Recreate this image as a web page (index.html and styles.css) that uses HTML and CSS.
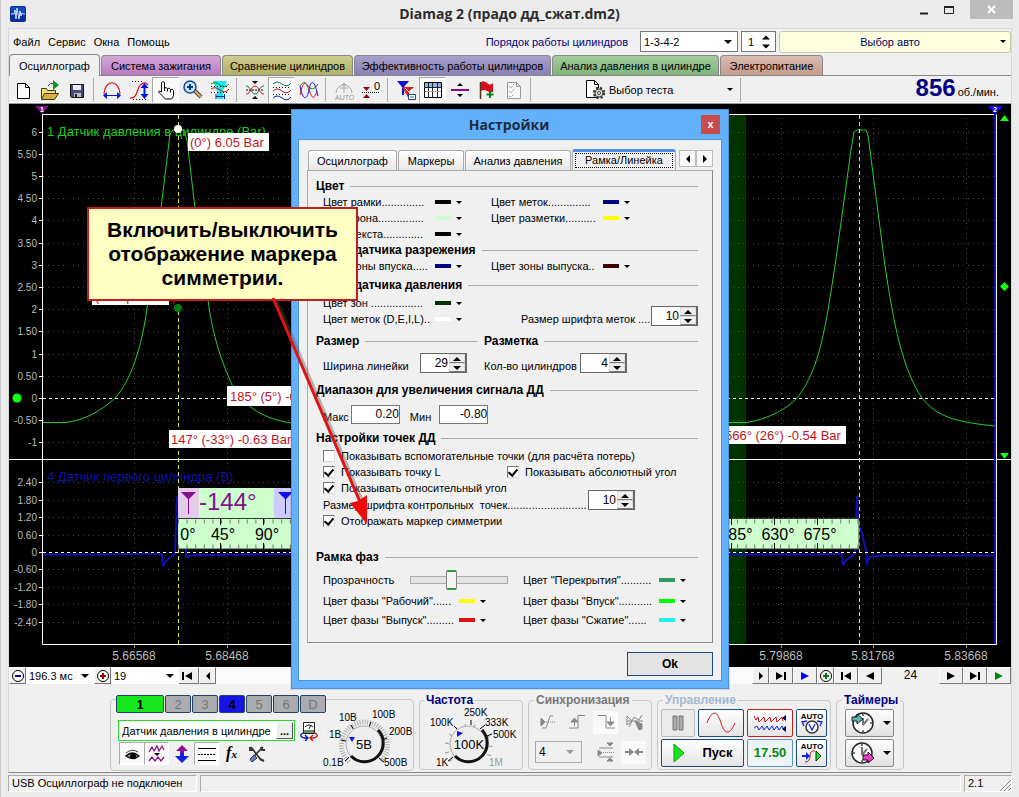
FILE: index.html
```
<!DOCTYPE html>
<html lang="ru">
<head>
<meta charset="utf-8">
<title>Diamag 2 (прадо дд_сжат.dm2)</title>
<link rel="stylesheet" href="styles.css">
</head>
<body>
<div class="app">
  <header class="titlebar">
    <svg class="app-logo" width="16" height="16" viewBox="0 0 16 16"><rect width="16" height="16" rx="2" fill="#0a2f9c"/><rect x="1" y="1" width="14" height="6" rx="1" fill="#1648c0"/><path d="M1 8h3l1-4 1 9 1-11 2 11 1-8 1 5 1-3 1 1h2" fill="none" stroke="#cfe4ff"/></svg>
    <h1 class="app-title">Diamag 2 (прадо дд_сжат.dm2)</h1>
    <div class="win-buttons">
      <button class="win-btn" aria-label="Свернуть"><svg width="10" height="10"><path d="M1 8.500h8" stroke="#222" stroke-width="2"/></svg></button>
      <button class="win-btn" aria-label="Развернуть"><svg width="12" height="10"><path d="M1.500 1.500h9v7h-9z" fill="none" stroke="#222"/><path d="M1 2h10" stroke="#222" stroke-width="2"/></svg></button>
      <button class="win-btn win-close" aria-label="Закрыть"><svg width="10" height="10"><path d="M1 1l7 7M8 1l-7 7" stroke="#fff" stroke-width="2"/></svg></button>
    </div>
  </header>

  <main class="client">
    <div class="menubar">
      <nav class="menu"><button>Файл</button><button>Сервис</button><button>Окна</button><button>Помощь</button></nav>
      <label class="order-label" for="order">Порядок работы цилиндров</label>
      <span class="select order"><select id="order"><option>1-3-4-2</option></select></span>
      <span class="flat-spin"><input value="1" aria-label="Номер цилиндра"><svg width="8" height="14" viewBox="0 0 8 14"><path d="M0 4.500L4 .5l4 4zM0 9.500h8l-4 4z"/></svg></span>
      <button class="car-select"><span>Выбор авто</span><i class="caret"></i></button>
    </div>

    <div class="tabs" role="tablist">
      <button class="tab active" role="tab">Осциллограф</button>
      <button class="tab ignition" role="tab">Система зажигания</button>
      <button class="tab compare" role="tab">Сравнение цилиндров</button>
      <button class="tab efficiency" role="tab">Эффективность работы цилиндров</button>
      <button class="tab pressure" role="tab">Анализ давления в цилиндре</button>
      <button class="tab power" role="tab">Электропитание</button>
    </div>

    <div class="toolbar">
      <button class="tool" aria-label="Новый"><svg width="22" height="22"><path d="M5.500 4.500h8l4 4v11h-12zM13.500 4.500v4h4" fill="#fff" stroke="#000"/></svg></button>
      <button class="tool" aria-label="Открыть"><svg width="22" height="22"><path d="M2.500 20V9.500h5l1 2h8v3" fill="#f0dc6c" stroke="#4a3a00"/><path d="M2.500 20.500l3-6h14l-4 6z" fill="#d8b040" stroke="#4a3a00"/><path d="M9 7q2-4 6-2" fill="none" stroke="#333"/><path d="M14 1l6 5-6 5z" fill="#0a9a2c"/></svg></button>
      <button class="tool" aria-label="Сохранить"><svg width="22" height="22"><path d="M4.500 5.500h13v13h-12l-1-1z" fill="#4a4a7c" stroke="#111"/><path d="M7 6h8v5H7z" fill="#e8ecff"/><path d="M8 14h7v4H8z" fill="#bbb"/><path d="M9 15h2v3H9z" fill="#222"/></svg></button>
      <i class="sep"></i>
      <button class="tool" aria-label="Период"><svg width="22" height="22"><path d="M3 15C4 0 18 0 19 15" fill="none" stroke="#e01010" stroke-width="1.200"/><path d="M2 16.500l4-3.500v3h10v-3l4 3.500-4 3.500v-3H6v3z" fill="#0018e0"/></svg></button>
      <button class="tool" aria-label="Амплитуда"><svg width="22" height="22"><path d="M2 19C12 20 7 3 18 4l2 2" fill="none" stroke="#e01010" stroke-width="1.200"/><path d="M4 2.500h12M5 20.500h14" stroke="#000" stroke-dasharray="1 2"/><path d="M16.500 4l4 5h-3v6h3l-4 5-4-5h3V9h-3z" fill="#0018e0"/></svg></button>
      <button class="tool pressed" aria-label="Рука"><svg width="22" height="22"><path d="M6.500 13V3.500q1.500-2 3 0V9q2-1 3 .5 2-1 3 1 2-1 3 1v5q-1 3-2 3.500h-6L3.500 13q0-2 3 0z" fill="#fff" stroke="#000"/><path d="M9.500 9v3M12.500 9.500v3M15.500 10.500v3" stroke="#000"/></svg></button>
      <button class="tool" aria-label="Лупа"><svg width="22" height="22"><circle cx="8" cy="8" r="6" fill="#cbe6ff" stroke="#124a8c" stroke-width="1.500"/><path d="M5 8h6M8 5v6" stroke="#003c90" stroke-width="2"/><path d="M13 12l6 6" stroke="#5a4a3a" stroke-width="4"/><path d="M13 12l6 6" stroke="#d0a878" stroke-width="2"/></svg></button>
      <button class="tool" aria-label="Область"><svg width="22" height="22"><path d="M4 2h14l-4 10v8H8v-8z" fill="#18e8f0"/><path d="M2 5q5-3 9 1t9-1" fill="none" stroke="#108030"/><path d="M2 7.500h18M2 13.500h18" stroke="#111" stroke-dasharray="1 2"/><path d="M2 10q4-3 9 1t9-1" fill="none" stroke="#d01010"/><path d="M7 17.500h9M7 15v5M15.500 15v5" stroke="#003090"/></svg></button>
      <i class="sep"></i>
      <button class="tool" aria-label="Сжать"><svg width="22" height="22"><path d="M8 2h6l-3 3zM8 20h6l-3-3z"/><path d="M2 11h18" stroke="#000" stroke-dasharray="2 1"/><path d="M2 7c5 0 5 8 9 8s4-8 9-8" fill="none" stroke="#107030"/><path d="M2 15c5 0 5-8 9-8s4 8 9 8" fill="none" stroke="#c01010"/></svg></button>
      <button class="tool pressed" aria-label="Раздельно"><svg width="22" height="22" fill="none"><path d="M2 5q4-4 9 0t9-1" stroke="#108030"/><path d="M2 12q4-4 9 0t9-1" stroke="#d01010"/><path d="M2 19q4-4 9 0t9-1" stroke="#1010c0"/><path d="M2 8.500h18M2 15.500h18" stroke="#111" stroke-dasharray="1 2"/></svg></button>
      <button class="tool" aria-label="Совместно"><svg width="22" height="22" fill="none"><path d="M2 7c4-6 6-3 8 0s6 5 10-2" stroke="#108030"/><path d="M2 16C5 1 8 2 11 11s5 10 8 1" stroke="#e01010"/><path d="M2 7c3 16 7 14 9 4s5-12 9 6" stroke="#1010e0"/></svg></button>
      <i class="sep"></i>
      <button class="tool" aria-label="Авто"><svg width="22" height="22"><path d="M3 14a8 8 0 1116 0M11 4v10M8 7l3-3 3 3M7 9h8" fill="none" stroke="#aaa"/><text class="micro dim" x="2" y="21">AUTO</text></svg></button>
      <button class="tool" aria-label="Ноль"><svg width="22" height="22"><path d="M3 8h7l-3.500 4zM3 19h7l-3.500-4z" fill="#8c0808"/><path d="M2 13.500h18" stroke="#111" stroke-dasharray="1 1"/><text class="tiny" x="14" y="11">0</text></svg></button>
      <i class="sep"></i>
      <button class="tool" aria-label="Маркеры"><svg width="22" height="22"><path d="M2 2h12L9 8v8H7V8z" fill="#1010d8"/><path d="M7 8h12l-5 5v7z" fill="#d82020"/><path d="M10 9l4 4 3-3" fill="none" stroke="#fff"/><path d="M13.500 15.500h7v5h-7z" fill="#fff" stroke="#204080"/><path d="M15 18h4" stroke="#4060a0"/></svg></button>
      <button class="tool pressed" aria-label="Таблица"><svg width="22" height="22"><path d="M2.500 3.500h17v15h-17z" fill="#fff" stroke="#000"/><path d="M3 4h16v4H3z" fill="#8cb4e0"/><path d="M2 8.500h18M6.500 4v15M10.500 4v15M15.500 4v15" stroke="#222"/><path d="M3 12.500h16" stroke="#aaa"/></svg></button>
      <button class="tool" aria-label="Линия"><svg width="22" height="22"><path d="M8 7h6l-3-3zM8 15h6l-3 3z"/><path d="M2 11h18" stroke="#900090" stroke-width="2"/></svg></button>
      <button class="tool" aria-label="Флаг"><svg width="22" height="22"><path d="M4.500 3v17" stroke="#503010" stroke-width="1.500"/><path d="M5 3q3-2 6 1t6 0v9q-3 1-6-1t-6 0z" fill="#d80c18"/><path d="M14 12v7M10.500 15.500h7" stroke="#008020" stroke-width="2"/></svg></button>
      <button class="tool" aria-label="Отчёт"><svg width="22" height="22"><path d="M4.500 3.500h9l4 4v12h-13zM13.500 3.500v4h4" fill="#f8f8f8" stroke="#999"/><path d="M6 7l2 2 3-4M6 12l2 2 3-4M6 17l2 1 3-3" fill="none" stroke="#999" stroke-dasharray="2 1"/></svg></button>
      <i class="sep"></i>
      <button class="test-select">
        <svg width="22" height="22"><path d="M1.500 1.500h8l4 4v13h-12zM9.500 1.500v4h4" fill="#fff" stroke="#000"/><circle cx="14" cy="14" r="5" fill="#c8d0c4" stroke="#333" stroke-width="2.500" stroke-dasharray="2 2"/><circle cx="14" cy="14" r="4" fill="#d4dcd0" stroke="#444"/><circle cx="14" cy="14" r="1.500" fill="#fff" stroke="#444"/></svg>
        <span>Выбор теста</span><i class="caret"></i>
      </button>
      <i class="sep"></i>
      <div class="rpm"><strong>856</strong><span>об./мин.</span></div>
    </div>

    <svg class="scope" viewBox="9 104 1002 563">
      <rect x="9" y="104" width="1002" height="563"/>
      <path class="zone" d="M729 115h17v529h-17z"/>
      <path class="grid" d="M43 132.500h952M43 154.500h952M43 176.500h952M43 198.500h952M43 220.500h952M43 243.500h952M43 265.500h952M43 287.500h952M43 309.500h952M43 331.500h952M43 354.500h952M43 376.500h952M43 420.500h952M43 442.500h952M43 482.500h952M43 500.500h952M43 517.500h952M43 535.500h952M43 569.500h952M43 587.500h952M43 604.500h952M43 622.500h952M134.500 118v526M227.500 118v526M781.500 118v526M873.500 118v526M966.500 118v526"/>
      <path class="axis" d="M42 114.500h954.500V644.500H42.500V114M9 459.500h1002M39 132.500h3M39 154.500h3M39 176.500h3M39 198.500h3M39 220.500h3M39 243.500h3M39 265.500h3M39 287.500h3M39 309.500h3M39 331.500h3M39 354.500h3M39 376.500h3M39 398.500h3M39 420.500h3M39 442.500h3M39 482.500h3M39 500.500h3M39 517.500h3M39 535.500h3M39 552.500h3M39 569.500h3M39 587.500h3M39 604.500h3M39 622.500h3"/>
      <path class="xtick" d="M134.500 645v3M227.500 645v3M781.500 645v3M873.500 645v3M966.500 645v3"/>
      <path class="marker-line" d="M995 110V644"/>
      <g class="ylabels">
        <text x="37" y="136">6</text><text x="37" y="158">5.50</text><text x="37" y="180">5</text><text x="37" y="202">4.50</text><text x="37" y="224">4</text><text x="37" y="247">3.50</text><text x="37" y="269">3</text><text x="37" y="291">2.50</text><text x="37" y="313">2</text><text x="37" y="335">1.50</text><text x="37" y="358">1</text><text x="37" y="380">0.50</text><text x="37" y="402">0</text><text x="37" y="424">-0.50</text><text x="37" y="446">-1</text>
        <text x="37" y="486">2.40</text><text x="37" y="504">1.80</text><text x="37" y="521">1.20</text><text x="37" y="539">0.60</text><text x="37" y="556">0</text><text x="37" y="573">-0.60</text><text x="37" y="591">-1.20</text><text x="37" y="608">-1.80</text><text x="37" y="626">-2.40</text>
      </g>
      <g class="xlabels"><text x="134" y="660">5.66568</text><text x="227" y="660">5.68468</text><text x="781" y="660">5.79868</text><text x="873" y="660">5.81768</text><text x="966" y="660">5.83668</text></g>
      <text class="ch1" x="47" y="136">1 Датчик давления в цилиндре (Bar)</text>
      <text class="ch4" x="47" y="481">4 Датчик первого цилиндра (В)</text>
      <path class="blue" d="M43 554.500h60l50-1 9 1 1 12c2-7 8-9 12-13l1-25 1-32M186 549v8l8-2h16l82-1M729 554.500h90l23-1 1 12c2-7 8-8 12-12l2-58 1 28 3 7 5 20 1 12 3-6 16-1h108"/>
      <path class="green" d="M43 422.500H66C84 420 100 412 115 398C131 381 142 346 147 308L161 208L170 134L173 130H184L187 140L195 208L208 300C213 338 222 362 232 385C245 408 265 419 291 423M729 422.500H747C768 419 787 409 797 398C821 368 826 322 835 266L851 150L854 132L857 130H866L868 135L885 266C894 325 902 368 922 398C937 417 956 422 995 426"/>
      <path class="zero" d="M43 398.500h952M43 552.500h952"/>
      <path class="cursor" d="M178.500 115V644M859.500 115V644"/>
      <circle cx="178" cy="129" r="4" fill="#fff"/><circle cx="178" cy="308" r="4" fill="#087a12"/><circle cx="17" cy="398" r="4.500" fill="#1f1"/>
      <path d="M35 106h14l-7 8z" fill="#80108c"/><path d="M988 106h15l-8 8z" fill="#1010e8"/><text class="flag" x="40" y="112">1</text><text class="flag" x="993" y="112">2</text>
      <path d="M1000 121h9l-4.500-6zM1000 453h9l-4.500 6zM1000 286.500l4.500-4.500 4.500 4.500-4.500 4.500z" fill="#1f1"/>
      <g class="note">
        <path d="M188 133h81v18h-81zM92 287h77v18H92zM227 386h120v20H227zM169 430h123v18H169zM722 426h124v18H722z"/>
        <text x="190" y="147">(0°) 6.05 Bar</text><text x="95" y="301">(потери ВМТ)</text><text x="230" y="401">185° (5°) -0.31 Bar</text><text x="171" y="444">147° (-33°) -0.63 Bar</text><text x="725" y="440">566° (26°) -0.54 Bar</text>
      </g>
      <path d="M178 488h130v31H178zM178 519h681v30H178z" fill="#cfc"/>
      <path d="M178 488h21v30h-21z" fill="#e4cce8"/><path d="M274 488h30v30h-30z" fill="#ccf"/>
      <path d="M181 492h15l-7 7v15h-1v-15z" fill="#80108c"/><path d="M278 492h15l-7 7v15h-1v-15z" fill="#1010e8"/>
      <text class="angle" x="199" y="510">-144°</text>
      <path d="M178 518.500h681v30.500H178" fill="none" stroke="#333"/>
      <path d="M178 521.500h681M178 546.500h681" fill="none" stroke="#777" stroke-width="4" stroke-dasharray="1 7.600"/>
      <path d="M220.500 519v6M263.500 519v6M731.500 519v6M774.500 519v6M817.500 519v6M220.500 543v6M263.500 543v6M731.500 543v6M774.500 543v6M817.500 543v6" stroke="#000"/>
      <g class="degrees"><text x="188" y="540">0°</text><text x="223" y="540">45°</text><text x="267" y="540">90°</text><text x="736" y="540">585°</text><text x="778" y="540">630°</text><text x="820" y="540">675°</text></g>
    </svg>

    <div class="navrow">
      <button class="nav round" aria-label="Уменьшить"><svg width="14" height="14"><circle cx="7" cy="7" r="5.500" fill="#fff" stroke="#000"/><path d="M4 7h6" stroke="#00a" stroke-width="2"/></svg></button>
      <span class="select bare"><select aria-label="Длительность"><option>196.3 мс</option></select></span>
      <button class="nav round" aria-label="Увеличить"><svg width="14" height="14"><circle cx="7" cy="7" r="5.500" fill="#fff" stroke="#000"/><path d="M4 7h6M7 4v6" stroke="#900" stroke-width="2"/></svg></button>
      <span class="select bare frame"><select aria-label="Кадр"><option>19</option></select></span>
      <button class="nav wide" aria-label="В начало"><svg width="12" height="10"><path d="M1 1h2v8H1zM11 1v8L4 5z"/></svg></button>
      <button class="nav" aria-label="Назад"><svg width="8" height="10"><path d="M6 1v8L2 5z"/></svg></button>
      <span class="nav-gap"></span>
      <button class="nav" aria-label="Вперёд"><svg width="8" height="10"><path d="M2 1v8l4-4z"/></svg></button>
      <button class="nav wide" aria-label="В конец"><svg width="12" height="10"><path d="M9 1h2v8H9zM1 1v8l7-4z"/></svg></button>
      <button class="nav wide" aria-label="Пуск просмотра"><svg width="10" height="10"><path d="M1 1v8l8-4z" fill="#00f"/></svg></button>
      <button class="nav round" aria-label="Добавить"><svg width="14" height="14"><circle cx="7" cy="7" r="5.500" fill="#fff" stroke="#000"/><path d="M4 7h6M7 4v6" stroke="#070" stroke-width="2"/></svg></button>
      <button class="nav wide" aria-label="Первый цикл"><svg width="12" height="10"><path d="M1 1h2v8H1zM11 1v8L4 5z"/></svg></button>
      <button class="nav wide" aria-label="Предыдущий цикл"><svg width="10" height="10"><path d="M9 1v8L1 5z"/></svg></button>
      <output class="cycle">24</output>
      <button class="nav wide" aria-label="Следующий цикл"><svg width="10" height="10"><path d="M1 1v8l8-4z"/></svg></button>
      <button class="nav wide" aria-label="Последний цикл"><svg width="12" height="10"><path d="M9 1h2v8H9zM1 1v8l7-4z"/></svg></button>
      <button class="nav wide" aria-label="Воспроизвести"><svg width="10" height="10"><path d="M1 1v8l8-4z" fill="#080"/></svg></button>
    </div>

    <div class="controls">
      <section class="group channels">
        <div class="channel-left">
          <div class="channel-tabs"><button class="ch on">1</button><button class="ch">2</button><button class="ch">3</button><button class="ch sync">4</button><button class="ch">5</button><button class="ch">6</button><button class="ch">D</button></div>
          <div class="sensor-row"><span class="sensor"><input value="Датчик давления в цилиндре" aria-label="Датчик"><button>...</button></span>
            <svg width="20" height="20"><path d="M4.500 1.500h11v11h-11z" fill="#fff" stroke="#222"/><path d="M5 9h10v3H5z" fill="#6a8a6a"/><path d="M6 6q4-4 8 0M10 8l2-4" fill="none" stroke="#222"/><path d="M4 12q-5 3 1 5l3 0M6 14l3 3-3 3" fill="none" stroke="#0010a0" stroke-width="1.300"/><path d="M16 12q5 3-1 5h-3M14 14l-3 3 3 3" fill="none" stroke="#d01010" stroke-width="1.300"/></svg></div>
          <div class="mini-tools">
            <button class="tool pressed" aria-label="Показать"><svg width="20" height="20"><path d="M4 12q6-6 13 0-6 5-13 0z" fill="#999" stroke="#111" stroke-width="1.500"/><circle cx="11" cy="12" r="3"/><path d="M4 9q6-5 12-1" fill="none" stroke="#444"/></svg></button>
            <button class="tool pressed" aria-label="Фильтр"><svg width="20" height="20"><path d="M2 8l3-5 2 4 3-5 2 5 3-5 2 4M2 17l3-4 3 4 3-4 3 4 3-4" fill="none" stroke="#90108c" stroke-width="1.300"/><path d="M7 9h6l-3 3z"/></svg></button>
            <button class="tool" aria-label="Инверсия"><svg width="20" height="20"><path d="M10 1l6 6h-4v4H8V7H4z" fill="#90109a"/><path d="M10 19l7-7h-5V9H8v3H3z" fill="#1020e0"/></svg></button>
            <button class="tool pressed" aria-label="Линии"><svg width="20" height="20"><path d="M1 4.500h18M1 16.500h18" stroke="#000"/><path d="M1 10.500h18" stroke="#000" stroke-dasharray="2 1"/></svg></button>
            <button class="tool fx">f<small>x</small></button>
            <button class="tool" aria-label="Инструменты"><svg width="20" height="20"><path d="M4 3l10 13M16 3L7 12" stroke="#222" stroke-width="1.500"/><path d="M7 11l-4 4 2 3 5-4z" fill="#5c80c0" stroke="#335"/><path d="M14 3l1 3 3 0M3 3v3h3M13 15l4 2" fill="none" stroke="#333" stroke-width="2"/></svg></button>
          </div>
        </div>
        <svg class="knob" width="90" height="64" viewBox="322 706 90 64">
          <path d="M349 762a23 23 0 1131 0" fill="none" stroke="#aaa" stroke-width="5" stroke-dasharray="1 1.500"/>
          <path class="knob-tick" d="M345 761l4-4M341 740l5 1M351 725l3 5M371 722l-2 5M387 738l-5 2M384 762l-5-4"/>
          <circle cx="364" cy="744" r="18" fill="#eee" stroke="#aaa"/><path d="M378 730a18 18 0 01-27 26" fill="none" stroke="#111" stroke-width="3"/>
          <path d="M349 737h6l-3 5z" fill="#11f"/><text class="knob-value" x="364" y="749">5В</text>
          <g class="knob-label"><text x="323" y="766">0.1В</text><text x="329" y="738">1В</text><text x="339" y="721">10В</text><text x="372" y="718">100В</text><text x="389" y="735">200В</text><text x="384" y="766">500В</text></g>
        </svg>
      </section>

      <fieldset class="group freq"><legend>Частота</legend>
        <svg class="knob" width="98" height="63" viewBox="422 707 98 63">
          <path d="M451 761a22 22 0 1135 0" fill="none" stroke="#999" stroke-width="4" stroke-dasharray="1 8"/>
          <path class="knob-tick" d="M448 761l5-4M454 726l4 4M471 720v5M485 725l-5 4M492 734l-5 2"/>
          <circle cx="468" cy="744" r="18" fill="#eee" stroke="#aaa"/><path d="M482 730a18 18 0 01-27 26" fill="none" stroke="#111" stroke-width="3"/>
          <path d="M457 731l6 2-6 4z" fill="#11f"/><text class="knob-value" x="469" y="749">100K</text>
          <g class="knob-label"><text x="436" y="766">1K</text><text x="430" y="726">100K</text><text x="464" y="716">250K</text><text x="485" y="726">333K</text><text x="493" y="738">500K</text><text x="489" y="766" class="dim">1M</text></g>
        </svg>
      </fieldset>

      <fieldset class="group sync-group"><legend>Синхронизация</legend>
        <div class="sync-row">
          <button class="tool" disabled aria-label="По уровню"><svg width="20" height="20" fill="none" stroke="#888"><path d="M4 16h4L12 4h3"/><path d="M2 10h16" stroke-dasharray="1 1"/><path d="M3 6v8l4-4z" fill="#888"/></svg></button>
          <button class="tool" disabled aria-label="По фронту"><svg width="20" height="20" fill="none" stroke="#888"><path d="M2 16h9V3.500h7"/><path d="M7.500 14V7M4 10l3.500-4 3.500 4z" fill="#888"/></svg></button>
          <button class="tool pressed" disabled aria-label="По спаду"><svg width="20" height="20" fill="none" stroke="#888"><path d="M2 3.500h8V16h9"/><path d="M14.500 5v7M11 10l3.500 4 3.500-4z" fill="#888"/></svg></button>
          <button class="tool" disabled aria-label="Вручную"><svg width="20" height="20" fill="none" stroke="#888"><path d="M2 4v9l5-4zM2 9h16M4 15l5-10 5 3 3-5"/><path d="M10 9l7 3v5l-3 1z" fill="#888"/></svg></button>
        </div>
        <div class="sync-row"><span class="select sync-select"><select aria-label="Канал синхронизации"><option>4</option></select></span>
          <button class="tool" disabled aria-label="Порог"><svg width="20" height="20" stroke="#888"><path d="M3 8v6l4-3zM12 1h6l-3 3zM12 19h6l-3-3z" fill="#888"/><path d="M4 6h14M4 15h14"/><path d="M6 10.500h13" stroke-dasharray="1 1"/></svg></button>
          <button class="tool pressed" disabled aria-label="Ширина"><svg width="20" height="20"><path d="M1 9h4V6l5 4-5 4v-3H1zM19 9h-4V6l-5 4 5 4v-3h4z" fill="#888"/></svg></button></div>
      </fieldset>

      <fieldset class="group run-group"><legend>Управление</legend>
        <div class="run-grid">
          <button class="cmd" disabled aria-label="Пауза"><svg width="14" height="16"><path d="M2 1h4v14H2zM8 1h4v14H8z" fill="#aaa" stroke="#777"/></svg></button>
          <button class="cmd" aria-label="Синусоида"><svg width="32" height="22"><path d="M2 11C8-5 13 1 16 11s8 14 14 0" fill="none" stroke="#e01010"/></svg></button>
          <button class="cmd live" aria-label="Самописец"><svg width="34" height="22" fill="none"><path d="M1 4l2 4 2-3 1 5 3-3 2-2 1 5 3-3 2-2 1 5 3-3 2-2 1 5 3-3 2-2 1 4" stroke="#d01010"/><path d="M1 16l3-2 2 4 3-4 2 4 3-4 2 4 3-4 2 4 3-4 2 4 3-4 2 4" stroke="#1020e0"/><path d="M33 3v6l-4-3zM33 14v6l-4-3z" fill="#006"/></svg></button>
          <button class="cmd" aria-label="Автонастройка"><svg width="26" height="24"><text class="auto" x="13" y="8">AUTO</text><circle cx="13" cy="16" r="6" fill="#fff" stroke="#333" stroke-width="1.500"/><path d="M10 13l3 6 3-6M5 15l-2-4 5-1M21 15l2-4-5-1" fill="none" stroke="#12d" stroke-width="1.300"/></svg></button>
          <button class="cmd start"><svg width="12" height="20"><path d="M1 1l10 9L1 19z" fill="#19e51c" stroke="#0a9a10"/></svg><span>Пуск</span></button>
          <button class="cmd rate">17.50</button>
          <button class="cmd" aria-label="Автопуск"><svg width="26" height="24"><text class="auto" x="13" y="8">AUTO</text><path d="M6 21q5 0 5-6t5-5" fill="none" stroke="#c01010"/><path d="M3 14h4v-3l4 4-4 4v-3H3z" fill="#12e"/><path d="M17 10v10l5-5z" fill="#1e2" stroke="#030"/></svg></button>
        </div>
      </fieldset>

      <fieldset class="group timers"><legend>Таймеры</legend>
        <button class="timer" aria-label="Таймер начала"><svg width="28" height="24"><circle cx="14" cy="12" r="10" fill="#fff" stroke="#222" stroke-width="1.500"/><path d="M14 14V7M14 14l5-6M14 3v2M23 12h-2M14 21v-2" stroke="#777" stroke-width="2"/><path d="M3 6h5V3l6 5-6 5v-3H3z" fill="#5cb8b0" stroke="#123"/></svg><i class="caret"></i></button>
        <button class="timer" aria-label="Таймер конца"><svg width="28" height="24"><circle cx="13" cy="12" r="10" fill="#fff" stroke="#222" stroke-width="1.500"/><path d="M13 14V6M13 14l5-6M13 3v2M4 12h2M13 21v-2" stroke="#777" stroke-width="2"/><path d="M14 14h5v-3l6 6-6 5v-3h-5z" fill="#e63fc0" stroke="#303"/></svg><i class="caret"></i></button>
      </fieldset>
    </div>
  </main>

  <footer class="status"><div class="status-main">USB Осциллограф не подключен</div><div class="status-mid"></div><div class="status-ver">2.1<svg width="12" height="12"><path d="M1 12L12 1M5 12l7-7M9 12l3-3" stroke="#888"/></svg></div></footer>

  <div class="dialog" role="dialog" aria-labelledby="dlg-title">
    <div class="dialog-title"><h2 id="dlg-title">Настройки</h2><button class="dialog-close" aria-label="Закрыть">x</button></div>
    <div class="dialog-body">
      <div class="dialog-tabs" role="tablist">
        <button class="dtab t1" role="tab">Осциллограф</button><button class="dtab t2" role="tab">Маркеры</button><button class="dtab t3" role="tab">Анализ давления</button><button class="dtab t4 current" role="tab"><span>Рамка/Линейка</span></button>
        <div class="tab-scroll"><button aria-label="Влево"><svg width="6" height="8"><path d="M5 0v8L1 4z"/></svg></button><button aria-label="Вправо"><svg width="6" height="8"><path d="M1 0v8l4-4z"/></svg></button></div>
      </div>
      <div class="page">
        <h3>Цвет</h3>
        <div class="row"><button class="color"><span>Цвет рамки..............</span><i class="sw black"></i><i class="caret"></i></button><button class="color"><span>Цвет меток..............</span><i class="sw navy"></i><i class="caret"></i></button></div>
        <div class="row"><button class="color"><span>Цвет фона...............</span><i class="sw mint"></i><i class="caret"></i></button><button class="color"><span>Цвет разметки..........</span><i class="sw yellow"></i><i class="caret"></i></button></div>
        <div class="row"><button class="color"><span>Цвет текста.............</span><i class="sw black"></i><i class="caret"></i></button></div>
        <h3>Цвета датчика разрежения</h3>
        <div class="row"><button class="color"><span>Цвет зоны впуска.....</span><i class="sw navy"></i><i class="caret"></i></button><button class="color"><span>Цвет зоны выпуска..</span><i class="sw maroon"></i><i class="caret"></i></button></div>
        <h3 class="pressure-head">Цвета датчика давления</h3>
        <div class="row"><button class="color"><span>Цвет зон .................</span><i class="sw forest"></i><i class="caret"></i></button></div>
        <div class="row"><button class="color"><span>Цвет меток (D,E,I,L)..</span><i class="sw white"></i><i class="caret"></i></button><div class="mark-size"><label for="marksize">Размер шрифта меток ....</label><span class="spin"><input id="marksize" value="10"><button aria-label="Больше"></button><button aria-label="Меньше"></button></span></div></div>
        <div class="sizes">
          <section><h3>Размер</h3><div class="row tall"><label for="rwidth">Ширина линейки</label><span class="spin"><input id="rwidth" value="29"><button aria-label="Больше"></button><button aria-label="Меньше"></button></span></div></section>
          <section><h3>Разметка</h3><div class="row tall"><label for="cyls">Кол-во цилиндров</label><span class="spin"><input id="cyls" value="4"><button aria-label="Больше"></button><button aria-label="Меньше"></button></span></div></section>
        </div>
        <h3 class="range-head">Диапазон для увеличения сигнала ДД</h3>
        <div class="row tall range"><label for="max">Макс</label><input class="num" id="max" value="0.20"><label for="min">Мин</label><input class="num" id="min" value="-0.80"></div>
        <h3 class="points-head">Настройки точек ДД</h3>
        <div class="row checks"><label><input type="checkbox">Показывать вспомогательные точки (для расчёта потерь)</label></div>
        <div class="row checks"><label class="half"><input type="checkbox" checked>Показывать точку L</label><label><input type="checkbox" checked>Показывать абсолютный угол</label></div>
        <div class="row checks"><label><input type="checkbox" checked>Показывать относительный угол</label></div>
        <div class="row point-size"><label for="psize">Размер шрифта контрольных&nbsp; точек..........................</label><span class="spin"><input id="psize" value="10"><button aria-label="Больше"></button><button aria-label="Меньше"></button></span></div>
        <div class="row checks"><label><input type="checkbox" checked>Отображать маркер симметрии</label></div>
        <h3 class="phase-head">Рамка фаз</h3>
        <div class="phases">
          <div class="opacity"><label for="op">Прозрачность</label><input type="range" id="op" value="41"></div>
          <button class="color"><span>Цвет "Перекрытия"..........</span><i class="sw sea"></i><i class="caret"></i></button>
          <button class="color"><span>Цвет фазы "Рабочий"......</span><i class="sw yellow"></i><i class="caret"></i></button>
          <button class="color"><span>Цвет фазы "Впуск"...........</span><i class="sw lime"></i><i class="caret"></i></button>
          <button class="color"><span>Цвет фазы "Выпуск".........</span><i class="sw red"></i><i class="caret"></i></button>
          <button class="color"><span>Цвет фазы "Сжатие"......</span><i class="sw cyan"></i><i class="caret"></i></button>
        </div>
      </div>
      <button class="ok">Ok</button>
    </div>
  </div>

  <p class="callout">Включить/выключить отображение маркера симметрии.</p>
  <svg class="pointer" width="100" height="230" viewBox="268 297 100 230"><path d="M276 300l88 206" stroke="#555" stroke-opacity=".4" stroke-width="4"/><path d="M273 298l87 204" stroke="#e01414" stroke-width="3"/><path d="M367 524l-17-21 8-2 9-6z" fill="#f00a0a"/></svg>
</div>
</body>
</html>
```
FILE: styles.css
```
* { box-sizing: border-box; }
body { margin: 0; background: #ebebeb; color: #000; font: 11px/16px "Liberation Sans", Arial, sans-serif; }
button, input, select { font: inherit; color: inherit; margin: 0; padding: 0; border: 0; background: none; border-radius: 0; }
h1, h2, h3, p { margin: 0; }
svg { display: block; flex: none; }
.app { position: relative; min-height: 100vh; border-left: 1px solid #ccc; display: flex; flex-direction: column; overflow: hidden; }

.titlebar { display: flex; align-items: center; height: 28px; padding-left: 9px; }
.app-title { flex: 1; text-align: center; font: bold 14px/20px "Open Sans", "Noto Sans", sans-serif; color: #2c2c2c; padding-left: 82px; }
.win-buttons { display: flex; align-self: flex-start; align-items: center; margin-right: 6px; }
.win-btn { width: 25px; height: 19px; display: grid; place-items: center; }
.win-close { width: 43px; background: #bcbcbc; margin-left: 9px; }

.client { margin: 0 7px; background: #f0f0f0; border: 1px solid #d8d8d8; border-bottom: 1px solid #888; }
.menubar { display: flex; align-items: center; height: 25px; }
.menu { display: flex; gap: 8px; padding-left: 4px; flex: 1; }
.order-label { color: #000080; margin-right: 12px; }
.select { position: relative; display: flex; background: #fff; }
.select select { appearance: none; width: 100%; padding-left: 3px; outline: 0; }
.select::after { content: ""; position: absolute; right: 5px; top: calc(50% - 2px); border: 4px solid transparent; border-top-color: #000; border-bottom: 0; pointer-events: none; }
.order { width: 98px; height: 21px; border: 1px solid #777; margin-right: 3px; }
.flat-spin { display: flex; align-items: center; width: 35px; height: 21px; border: 1px solid #777; background: #fff; margin-right: 3px; }
.flat-spin input { width: 20px; padding-left: 6px; }
.car-select { display: flex; align-items: center; width: 232px; height: 22px; background: #ffffe0; border: 1px solid #c4c8b0; border-radius: 3px; color: #000060; padding-right: 4px; }
.car-select span { flex: 1; }
.caret { border: 3px solid transparent; border-top-color: #000; border-bottom: 0; }

.tabs { display: flex; align-items: flex-end; gap: 1px; height: 22px; border-bottom: 1px solid #888; }
.tab { height: 20px; border: 1px solid #888; border-bottom: 0; border-radius: 4px 4px 0 0; white-space: nowrap; }
.tab.active { width: 91px; height: 22px; background: #f0f0f0; margin-bottom: -1px; }
.ignition { width: 120px; background: linear-gradient(#d4a8d8, #b87cc0); }
.compare { width: 131px; background: linear-gradient(#cccc90, #b0b068); }
.efficiency { width: 197px; background: linear-gradient(#a8a0cc, #8880b4); }
.pressure { width: 167px; background: linear-gradient(#a4cc9c, #80b47c); }
.power { width: 103px; background: linear-gradient(#d8bcb0, #c49c8c); }

.toolbar { display: flex; align-items: center; height: 28px; border-bottom: 1px solid #999; box-shadow: inset 0 -1px #fff; }
.tool { width: 27px; height: 26px; display: grid; place-items: center; flex: none; }
.tool.pressed { background: #fafafa; border: 1px solid #aaa; border-right-color: #fff; border-bottom-color: #fff; }
.sep { width: 1px; height: 24px; margin: 0 4px 0 3px; background: #aaa; flex: none; }
.micro { font-size: 7px; }
.tiny { font-size: 11px; }
.dim { fill: #999; }
.test-select { display: flex; align-items: center; gap: 2px; width: 202px; padding: 0 4px 0 50px; }
.test-select .caret { margin-left: auto; }
.rpm { display: flex; align-items: baseline; gap: 2px; margin-left: auto; padding-right: 12px; }
.rpm strong { font-size: 24px; color: #000080; }

.scope { width: 100%; height: auto; font-size: 11px; }
.zone { fill: #003300; }
.grid { stroke: #4a4a3c; stroke-dasharray: 1 4; fill: none; }
.axis { stroke: #fff; fill: none; }
.xtick { stroke: #999; }
.marker-line { stroke: #1010b0; stroke-width: 2; }
.ylabels { fill: #bbb; text-anchor: end; font-size: 10px; }
.xlabels { fill: #bbb; text-anchor: middle; font-size: 12px; }
.ch1 { fill: #2c2; font-size: 13px; }
.ch4 { fill: #1212a8; font-size: 13px; }
.blue { fill: none; stroke: #1010b4; stroke-width: 2; }
.green { fill: none; stroke: #28cc30; stroke-width: 1; }
.zero { fill: none; stroke: #fff; stroke-dasharray: 3 3; }
.cursor { fill: none; stroke: #e4e440; stroke-dasharray: 4 3; }
.flag { fill: #fff; font-size: 7px; font-weight: bold; }
.note path { fill: #fff; }
.note text { fill: #c41420; font-size: 13px; }
.angle { fill: #80108c; font-size: 24px; }
.degrees { text-anchor: middle; font-size: 16px; }

.navrow { display: flex; height: 17px; background: #fafafa; }
.nav { width: 17px; height: 17px; display: grid; place-items: center; background: #f0f0f0; border: 1px solid #fff; border-right-color: #777; border-bottom-color: #777; flex: none; }
.nav.wide { width: 24px; }
.bare { width: 68px; }
.bare.frame { margin-right: -4px; }
.nav-gap { flex: 1; }
.cycle { width: 57px; text-align: center; background: #f0f0f0; font-size: 12px; }

.controls { display: flex; align-items: flex-start; gap: 5px; height: 88px; padding: 9px 0 0 101px; }
.group { margin: 0; padding: 0 3px; min-width: 0; border: 1px solid #c8c8c8; border-radius: 4px; height: 77px; }
legend { font-weight: bold; font-size: 12px; line-height: 14px; color: #000080; padding: 0 2px; margin-left: 2px; }
.channels { display: flex; width: 304px; height: 72px; margin-top: 6px; padding: 0 0 0 5px; }
.channel-left { margin-top: -5px; width: 206px; }
.channels .knob { margin-top: 6px; }
.channel-tabs { display: flex; gap: 1px; width: 211px; }
.ch { flex: none; width: 26px; height: 18px; background: #a9adb2; color: #777; border: 1px solid #224060; border-radius: 2px; font-size: 13px; line-height: 15px; }
.ch.on { width: 48px; background: #14e81c; color: #000; font-weight: bold; }
.ch.sync { background: #1414e4; color: #000; font-weight: bold; }
.sensor-row { display: flex; align-items: center; gap: 4px; margin: 7px 0 1px 2px; }
.sensor { display: flex; width: 177px; height: 21px; background: #fff; border: 1px solid #2bd62f; padding: 1px; }
.sensor input { width: 157px; padding-left: 2px; }
.sensor button { width: 17px; line-height: 8px; background: #eee; border: 1px solid #fff; border-right-color: #555; border-bottom-color: #555; font-weight: bold; }
.mini-tools { display: flex; margin-left: 3px; }
.mini-tools .tool { width: 25px; height: 23px; }
.fx { font: italic bold 16px/16px "Liberation Serif", serif; display: block; }
.fx small { font-size: 11px; }
.knob-tick { stroke: #000; }
.knob-value { text-anchor: middle; font-size: 13px; }
.knob-label { font-size: 10px; }
.freq { width: 104px; padding-left: 2px; }
.sync-group { width: 124px; padding-left: 6px; }
.sync-group legend { color: #777; margin-left: -1px; }
.sync-row { display: flex; gap: 4px; height: 30px; align-items: center; }
.sync-row .tool { width: 25px; height: 23px; }
.sync-row .tool.pressed { border: 0; }
.sync-select { width: 47px; height: 22px; border: 1px solid #aaa; background: #f0f0f0; margin-right: 6px; font-size: 12px; }
.sync-select::after { border-top-color: #999; right: 7px; }
.run-group { width: 174px; }
.run-group legend { color: #a4b8d0; }
.run-grid { display: grid; grid-template-columns: 34px 46px 46px 31px; gap: 2px 3px; margin-top: 2px; }
.cmd { height: 28px; display: flex; align-items: center; justify-content: center; background: linear-gradient(#fff, #e4e4e4); border: 1px solid #1c4a7c; border-radius: 2px; font-weight: bold; }
.cmd:disabled { background: #eaeaea; border-color: #bbb; }
.cmd.live { border-color: #d41818; }
.start { grid-column: span 2; font-size: 13px; gap: 18px; }
.rate { color: #0a8414; background: #ecf4f8; border-color: #5c94bc; font-size: 13px; }
.auto { text-anchor: middle; font-size: 8px; font-weight: bold; }
.timers { width: 68px; padding: 0 8px; }
.timers legend { margin-left: -3px; }
.timer { width: 49px; height: 28px; margin: 2px 0 0; display: flex; align-items: center; gap: 6px; padding-left: 3px; background: linear-gradient(#fdfdfd, #e0e0e0); border: 1px solid #888; border-radius: 2px; }
.timer .caret { border-width: 4px 4px 0; }

.status { display: flex; gap: 3px; height: 17px; margin: 2px 7px 0; }
.status > div { border: 1px solid #aaa; border-right-color: #fff; border-bottom-color: #fff; background: #f0f0f0; padding-left: 3px; line-height: 15px; }
.status-main { width: 189px; white-space: nowrap; }
.status-mid { flex: 1; }
.status-ver { width: 48px; display: flex; justify-content: space-between; align-items: flex-end; }

.dialog { position: absolute; left: 290px; top: 109px; width: 438px; background: #64b1fb; border: 1px solid #4c94dc; padding: 0 6px 7px; box-shadow: 0 0 0 1px rgba(0, 0, 0, .1); }
.dialog-title { display: flex; height: 29px; align-items: center; }
.dialog-title h2 { flex: 1; padding-left: 19px; text-align: center; font: bold 14px/20px "Open Sans", "Noto Sans", sans-serif; color: #1c2c3c; }
.dialog-close { width: 19px; height: 19px; background: #c84c4c; color: #fff; font-weight: bold; line-height: 17px; margin-right: 2px; }
.dialog-body { background: #f0f0f0; border: 1px solid #4c94dc; padding: 8px 8px 4px; display: flex; flex-direction: column; }
.dialog-tabs { display: flex; align-items: flex-end; gap: 1px; height: 22px; padding-left: 1px; }
.dtab { height: 20px; background: linear-gradient(#fff, #e8e8e8); border: 1px solid #aaa; border-bottom: 0; border-radius: 3px 3px 0 0; white-space: nowrap; }
.t1 { width: 89px; }
.t2 { width: 66px; }
.t3 { width: 106px; }
.t4 { width: 104px; }
.dtab.current { height: 22px; background: #f0f0f0; border-top: 3px solid #4c90e0; padding: 0 2px 3px; margin-bottom: -1px; }
.current span { display: block; border: 1px dotted #000; line-height: 13px; }
.tab-scroll { display: flex; margin: 0 0 3px 2px; }
.tab-scroll button { width: 17px; height: 17px; display: grid; place-items: center; border: 1px solid #bbb; background: #f8f8f8; }
.page { border: 1px solid #aaa; border-right-color: #888; border-bottom-color: #888; padding: 7px 14px 14px 8px; }
.page h3 { display: flex; align-items: center; gap: 6px; height: 16px; font-size: 12px; white-space: nowrap; }
.page h3::after { content: ""; flex: 1; height: 1px; background: #aaa; }
.page .pressure-head { margin-top: 3px; }
.pressure-head + .row { margin-top: 2px; }
.row { display: flex; align-items: center; height: 16px; padding-left: 7px; white-space: nowrap; }
.row > .color:first-child { margin-right: 26px; }
.color { display: flex; align-items: center; width: 142px; text-align: left; }
.color span { width: 112px; height: 16px; white-space: nowrap; }
.color .caret { margin-left: 5px; }
.sw { width: 16px; height: 4px; flex: none; }
.black { background: #000; }
.navy { background: #000080; }
.mint { background: #ccffcc; }
.yellow { background: #ff0; }
.maroon { background: #400000; }
.forest { background: #003300; }
.white { background: #fff; }
.sea { background: #339966; }
.lime { background: #0f0; }
.red { background: #e01010; }
.cyan { background: #20f0f0; }
.spin { display: grid; grid-template: 9px 9px / 28px 16px; width: 47px; height: 20px; border: 1px solid #666; border-right-width: 2px; background: #fff; flex: none; }
.spin input { grid-row: span 2; width: 28px; text-align: right; font-size: 12px; padding-right: 1px; }
.spin button { background: #eee; border: 1px solid #ddd; border-bottom-color: #777; display: grid; place-items: center; }
.spin button::after { content: ""; border: 4px solid transparent; border-top: 0; border-bottom-color: #000; }
.spin button:last-child::after { border: 4px solid transparent; border-bottom: 0; border-top-color: #000; }
.mark-size { display: flex; margin-left: 32px; flex: 1; align-items: center; }
.mark-size label { width: 130px; }
.mark-size .spin { margin-top: -6px; }
.sizes { display: grid; grid-template-columns: 161px 1fr; gap: 7px; margin-top: 6px; }
.tall { height: 24px; margin-top: 2px; }
.tall label { padding-top: 6px; }
.sizes .spin { margin: 0 10px 0 auto; }
.sizes section + section .tall { padding-left: 0; }
.sizes section + section .spin { margin-left: 3px; }
.page .range-head { margin-top: 7px; }
.range { margin-top: 4px; }
.num { width: 49px; height: 19px; border: 1px solid #777; background: #fff; text-align: right; font-size: 12px; margin: 0 10px 0 2px; }
.num:last-child { margin-left: 8px; }
.page .points-head { margin-top: 4px; }
.points-head + .row { margin-top: 2px; }
.checks label { display: flex; align-items: center; gap: 6px; }
.checks .half { width: 184px; }
.checks input { appearance: none; width: 12px; height: 12px; background: #fff; border: 1px solid #777; border-right-color: #ddd; border-bottom-color: #ddd; display: grid; place-items: center; }
.checks input:checked::before { content: ""; width: 4px; height: 7px; border: solid #000; border-width: 0 2px 2px 0; transform: rotate(40deg); margin-top: -2px; }
.point-size { height: 17px; }
.point-size label { width: 265px; }
.point-size .spin { margin-top: -9px; }
.page .phase-head { margin-top: 20px; }
.phases { display: grid; grid-template-columns: 200px 1fr; row-gap: 3px; padding: 5px 0 0 7px; align-items: center; }
.phases .color { width: 166px; }
.phases .color span { width: 136px; }
.opacity { display: flex; align-items: center; gap: 16px; height: 20px; }
.opacity input { appearance: none; width: 98px; height: 8px; background: #e4e4e4; border: 1px solid #aaa; }
.opacity input::-webkit-slider-thumb { appearance: none; width: 11px; height: 20px; background: #f4f4f4; border: 1px solid #888; border-top: 2px solid #2c9c3c; border-bottom: 2px solid #2c9c3c; border-radius: 2px; }
.ok { align-self: flex-end; width: 86px; height: 24px; margin-top: 9px; background: #e4e4e4; border: 1px solid #1c4a7c; font-weight: bold; font-size: 12px; }

.callout { position: absolute; left: 86px; top: 207px; width: 271px; background: #ffffc4; border: 2px solid #c41c1c; padding: 9px 10px; text-align: center; font-weight: bold; font-size: 21px; line-height: 24px; }
.pointer { position: absolute; left: 267px; top: 297px; }
```
